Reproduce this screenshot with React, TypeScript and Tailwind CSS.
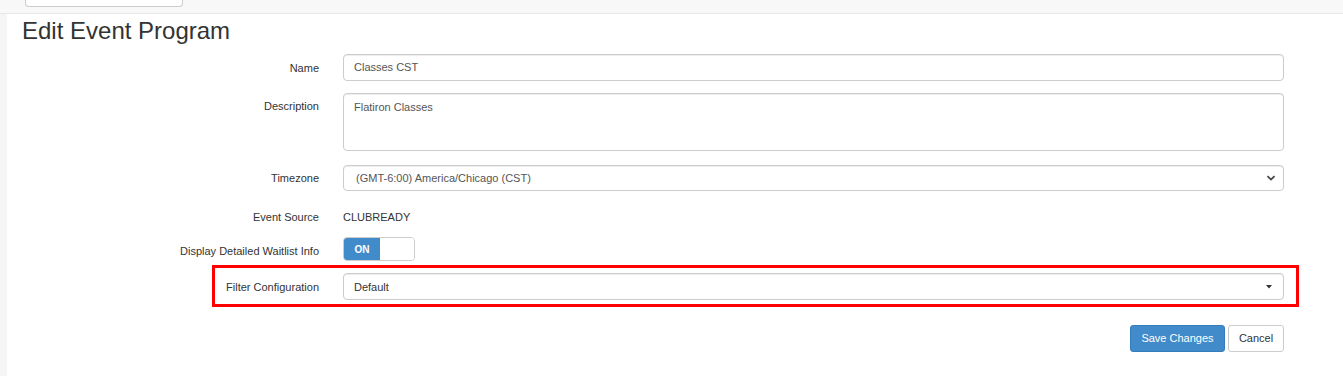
import React from "react";

const font = { fontFamily: '"Liberation Sans", Arial, sans-serif' };

function Label({ children, className = "" }: { children: React.ReactNode; className?: string }) {
  return (
    <div className={`shrink-0 text-right text-[11px] leading-[14px] text-[#333] ${className}`}>{children}</div>
  );
}

export default function App() {
  return (
    <div className="w-[1343px] h-[376px] bg-white overflow-hidden" style={font}>
      {/* top bar */}
      <div className="h-[14px] bg-[#f8f8f8] border-b border-[#e7e7e7] flex">
        <div className="ml-[25px] w-[158px] h-[7px] bg-white border border-t-0 border-[#ccc] rounded-b-[4px]" />
      </div>
      <div className="flex h-[362px]">
        <div className="w-[7px] bg-[#f5f5f5] shrink-0" />
        <div className="flex-1 flex flex-col">
          <h3 className="mt-[4px] ml-[15px] text-[24px] leading-[26px] text-[#333]">Edit Event Program</h3>

          {/* Name */}
          <div className="mt-[10px] flex items-center">
            <Label className="w-[312px]">Name</Label>
            <div className="ml-[24px] w-[941px] h-[27px] border border-[#ccc] rounded-[4px] flex items-center px-[10px] text-[11px] text-[#555] shadow-[inset_0_1px_1px_rgba(0,0,0,0.075)]">
              Classes CST
            </div>
          </div>

          {/* Description */}
          <div className="mt-[12px] flex items-start">
            <Label className="w-[312px] pt-[6px]">Description</Label>
            <div className="ml-[24px] w-[941px] h-[58px] border border-[#ccc] rounded-[4px] px-[10px] pt-[6px] text-[11px] leading-[14px] text-[#555] shadow-[inset_0_1px_1px_rgba(0,0,0,0.075)]">
              Flatiron Classes
            </div>
          </div>

          {/* Timezone */}
          <div className="mt-[14px] flex items-center">
            <Label className="w-[312px]">Timezone</Label>
            <div className="ml-[24px] w-[941px] h-[26px] border border-[#ccc] rounded-[4px] flex items-center justify-between pl-[12px] pr-[5px] text-[11px] text-[#555] shadow-[inset_0_1px_1px_rgba(0,0,0,0.075)]">
              <span>(GMT-6:00) America/Chicago (CST)</span>
              <svg width="12" height="12" viewBox="0 0 12 12" className="mr-[1px]">
                <path d="M2.5 4.2 L6 7.6 L9.5 4.2" fill="none" stroke="#444" strokeWidth="1.8" />
              </svg>
            </div>
          </div>

          {/* Event Source */}
          <div className="mt-[13px] h-[26px] flex items-center">
            <Label className="w-[312px]">Event Source</Label>
            <div className="ml-[24px] text-[11px] text-[#333]">CLUBREADY</div>
          </div>

          {/* Display Detailed Waitlist Info */}
          <div className="mt-[7px] flex items-center">
            <Label className="w-[312px] mt-[4px]">Display Detailed Waitlist Info</Label>
            <div className="ml-[24px] w-[72px] h-[24px] border border-[#ccc] rounded-[4px] flex overflow-hidden">
              <div className="w-[36px] h-full bg-[#428bca] text-white text-[10px] font-bold flex items-center justify-center">ON</div>
              <div className="flex-1 bg-white" />
            </div>
          </div>

          {/* Filter Configuration (highlighted) */}
          <div className="mt-[4px] ml-[205px] w-[1087px] border-[3px] border-[#ff0000] pt-[5px] pb-[4px] flex items-center">
            <Label className="w-[104px] mt-[1px]">Filter Configuration</Label>
            <div className="ml-[24px] w-[941px] h-[27px] border border-[#ccc] rounded-[4px] flex items-center justify-between pl-[10px] pr-[11px] text-[11px] text-[#333] shadow-[inset_0_1px_1px_rgba(0,0,0,0.075)]">
              <span className="mt-[1px]">Default</span>
              <svg width="6" height="4" viewBox="0 0 6 4">
                <path d="M0 0 L6 0 L3 3.5 Z" fill="#333" />
              </svg>
            </div>
          </div>

          {/* Buttons */}
          <div className="mt-[18px] flex justify-end w-[1277px] gap-[3px]">
            <div className="h-[27px] w-[95px] rounded-[3px] bg-[#428bca] border border-[#357ebd] text-white text-[11px] flex items-center justify-center">
              Save Changes
            </div>
            <div className="h-[27px] w-[56px] rounded-[3px] bg-white border border-[#ccc] text-[#333] text-[11px] flex items-center justify-center">
              Cancel
            </div>
          </div>
        </div>
      </div>
    </div>
  );
}
